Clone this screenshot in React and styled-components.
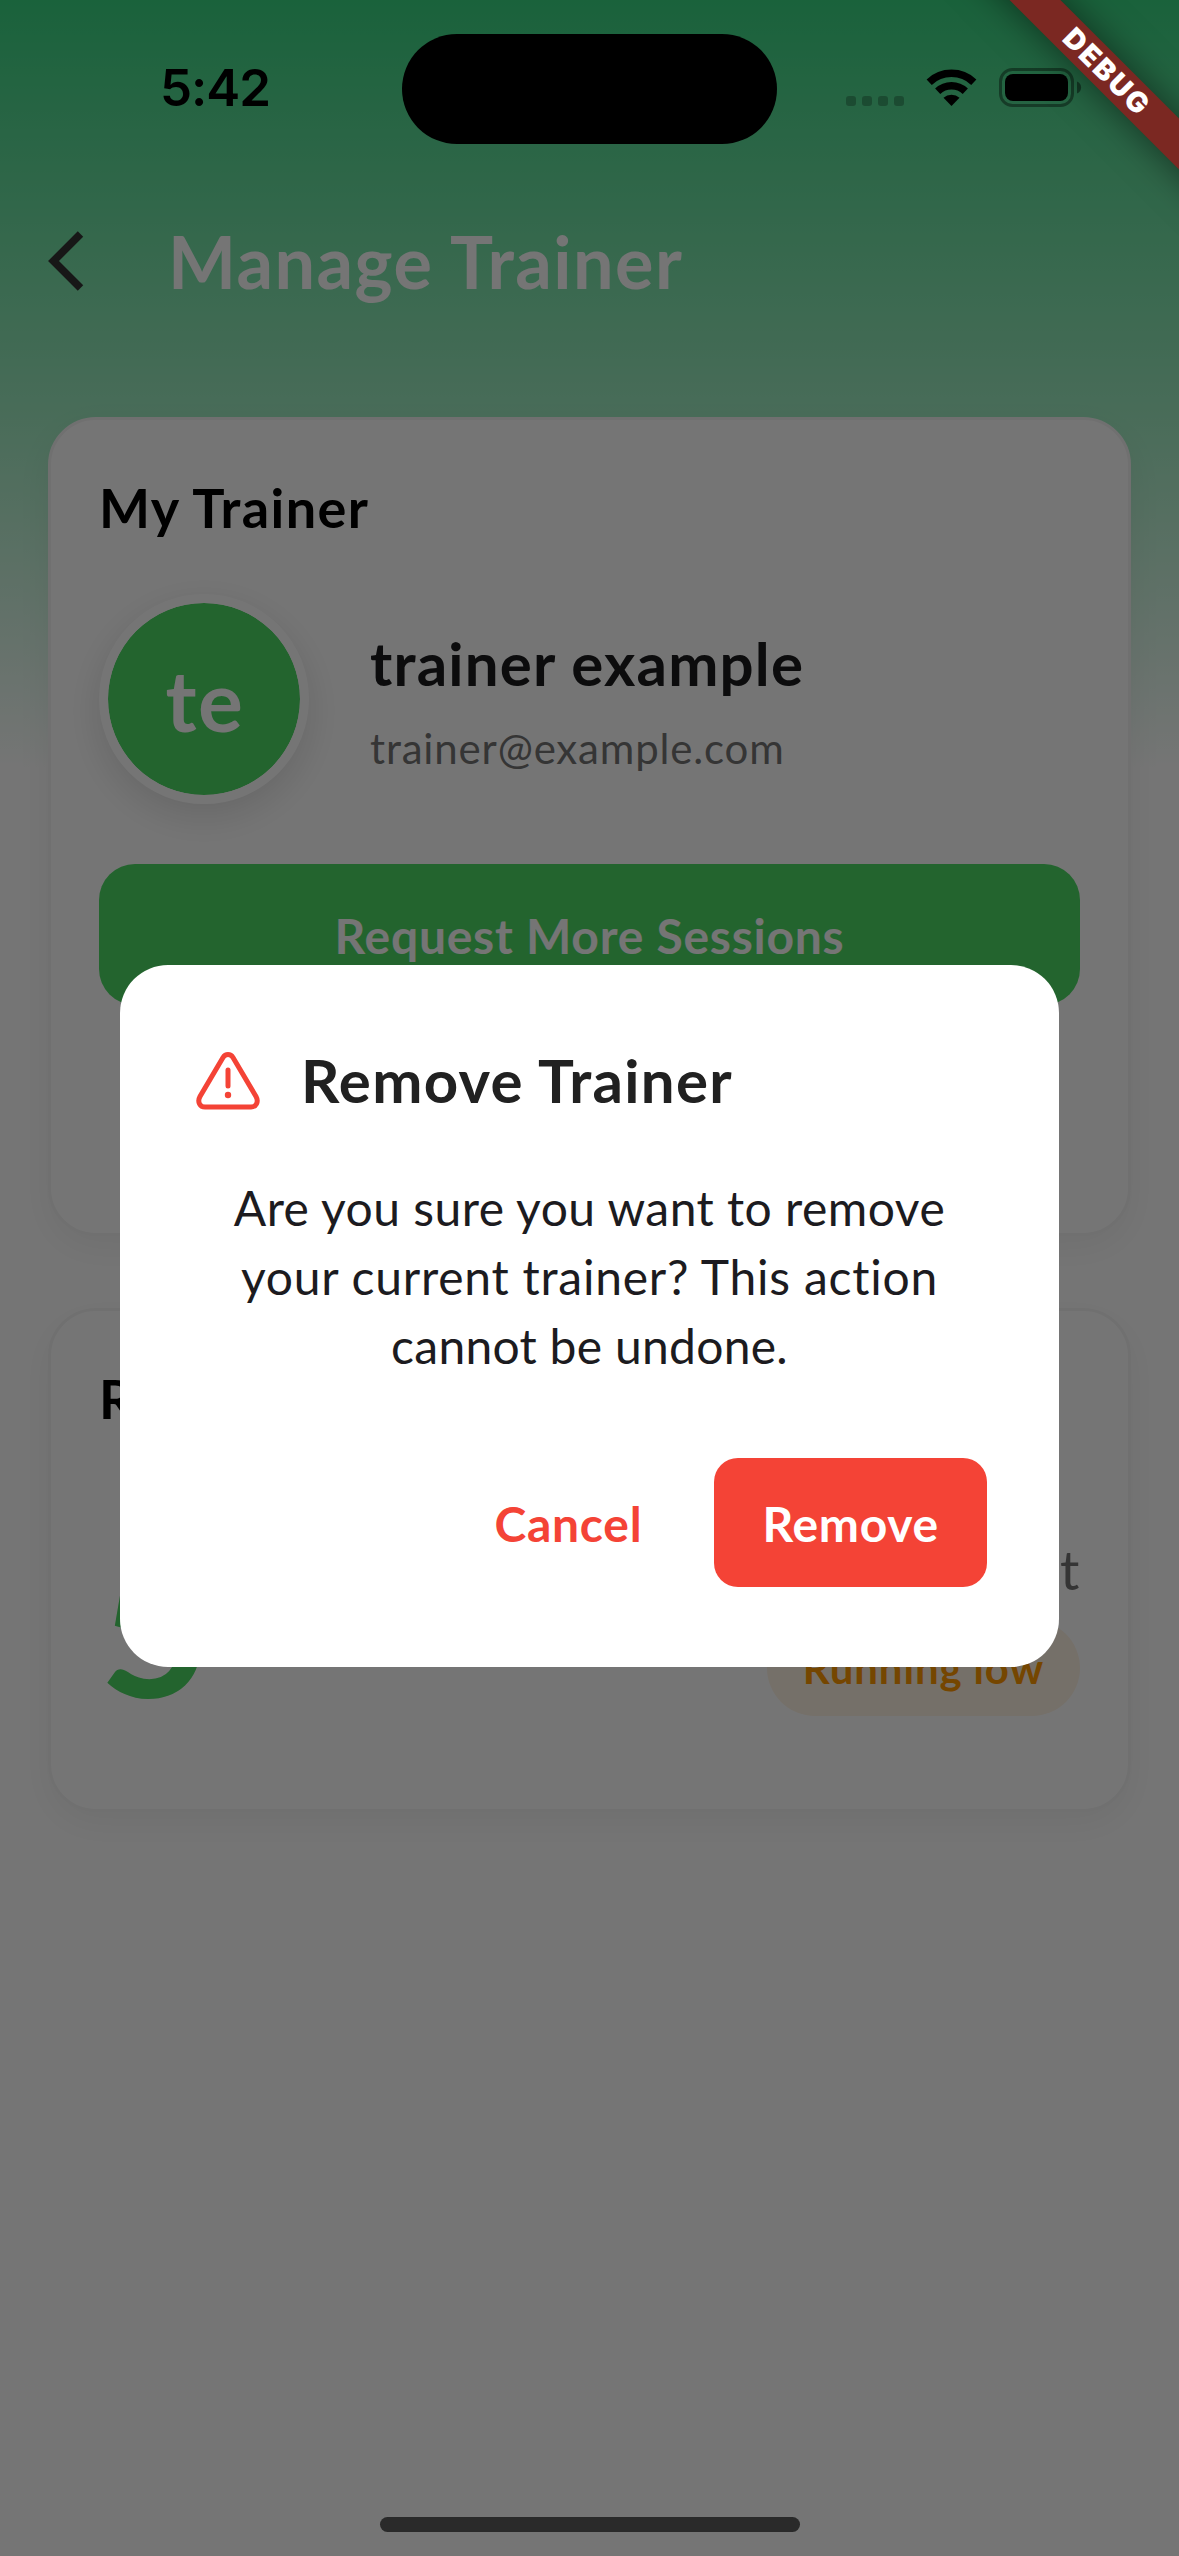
import React from 'react';
import styled, { createGlobalStyle } from 'styled-components';

const Global = createGlobalStyle`
  *{box-sizing:border-box}
  html,body{margin:0;padding:0;background:#757575}
  button{border:0;padding:0;margin:0;font:inherit;background:none}
`;

const Screen = styled.div`
  position: relative;
  width: 1179px;
  height: 2556px;
  overflow: hidden;
  background: #fff;
  font-family: Lato, "Liberation Sans", sans-serif;
`;
const Page = styled.div`
  height: 100%;
  padding-top: 177px;
  background: linear-gradient(180deg, #39d582 0, #a0ecc2 417px, #fff 768px);
`;
const Header = styled.header`
  display: flex;
  align-items: center;
  height: 168px;
  padding-left: 48px;
`;
const Back = styled.svg`
  width: 36px;
  height: 60px;
  margin-right: 84px;
`;
const Title = styled.h1`
  margin: 0;
  padding-bottom: 1px;
  font-size: 72px;
  font-weight: 700;
  line-height: 90px;
  letter-spacing: 1.45px;
  color: #fff;
`;
const Cards = styled.main`
  display: flex;
  flex-direction: column;
  gap: 72px;
  padding: 72px 48px 0;
`;
const Card = styled.section`
  height: ${(p) => p.$height}px;
  padding: 48px;
  border: 3px solid #f5f5f5;
  border-radius: 48px;
  background: #fff;
  box-shadow: 0 12px 36px rgba(0, 0, 0, 0.05);
`;
const CardTitle = styled.h2`
  margin: 0;
  font-size: 54px;
  line-height: 80px;
  font-weight: 700;
  letter-spacing: 1.4px;
  color: #000;
`;
const Profile = styled.div`
  display: flex;
  align-items: center;
  gap: 61px;
  margin-top: 46px;
`;
const Avatar = styled.div`
  display: grid;
  place-items: center;
  width: 210px;
  height: 210px;
  padding-left: 2px;
  border-radius: 50%;
  border: 9px solid #fff;
  background: #4cd964;
  background-clip: padding-box;
  box-shadow: 0 12px 36px rgba(0, 0, 0, 0.12);
  color: #fff;
  font-size: 84px;
  font-weight: 700;
  letter-spacing: 1.5px;
`;
const Person = styled.div`
  display: flex;
  flex-direction: column;
  gap: 16px;
  padding-top: 4px;
`;
const Name = styled.div`
  font-size: 60px;
  line-height: 78px;
  font-weight: 700;
  letter-spacing: 1.2px;
  color: #1c1c1e;
`;
const Email = styled.div`
  font-size: 42px;
  line-height: 60px;
  letter-spacing: 0.83px;
  color: #757575;
`;
const Request = styled.button`
  display: block;
  width: 100%;
  height: 141px;
  margin-top: 60px;
  padding-top: 1px;
  border-radius: 36px;
  background: #4cd964;
  color: #fff;
  font-size: 48px;
  font-weight: 700;
  letter-spacing: 0.75px;
`;
const Balance = styled.div`
  display: flex;
  justify-content: space-between;
  align-items: center;
  margin-top: 69px;
`;
const Count = styled.div`
  font-size: 192px;
  line-height: 230px;
  font-weight: 700;
  color: #4cd964;
`;
const Status = styled.div`
  display: flex;
  flex-direction: column;
  align-items: flex-end;
  gap: 13px;
  padding-top: 2px;
`;
const Left = styled.div`
  font-size: 54px;
  line-height: 75px;
  letter-spacing: 0.75px;
  color: #757575;
`;
const Pill = styled.div`
  padding: 18px 36px;
  border-radius: 48px;
  background: #fff4e5;
  color: #ff9800;
  font-size: 42px;
  line-height: 60px;
  font-weight: 700;
  letter-spacing: 0.85px;
`;
const Scrim = styled.div`
  position: absolute;
  inset: 0;
  display: flex;
  align-items: center;
  justify-content: center;
  padding-top: 75px;
  background: rgba(0, 0, 0, 0.54);
`;
const Dialog = styled.div`
  width: 939px;
  height: 702px;
  padding: 72px;
  border-radius: 48px;
  background: #fff;
`;
const DialogHead = styled.div`
  display: flex;
  align-items: center;
  gap: 37px;
  height: 90px;
`;
const Warning = styled.svg`
  width: 72px;
  height: 72px;
`;
const DialogTitle = styled.h2`
  margin: 0;
  padding-bottom: 4px;
  font-size: 60px;
  line-height: 86px;
  font-weight: 700;
  letter-spacing: 1.3px;
  color: #212121;
`;
const Message = styled.p`
  margin: 46px 0 0;
  text-align: center;
  font-size: 48px;
  line-height: 69px;
  color: #1c1b20;
`;
const Line = styled.span`
  display: block;
  letter-spacing: ${(p) => p.$tracking}px;
`;
const Actions = styled.div`
  display: flex;
  justify-content: flex-end;
  margin-top: 78.5px;
`;
const Action = styled.button`
  height: 129px;
  padding: 1px ${(p) => (p.$solid ? 48 : 72)}px 0;
  border-radius: 24px;
  background: ${(p) => (p.$solid ? '#f44336' : 'transparent')};
  color: ${(p) => (p.$solid ? '#fff' : '#f44336')};
  font-size: 48px;
  font-weight: 700;
  letter-spacing: 0.75px;
`;
const StatusBar = styled.div`
  position: absolute;
  inset: 0 0 auto 0;
  display: grid;
  grid-template-columns: 402px 375px 1fr;
  height: 177px;
  padding-top: 34px;
`;
const Time = styled.div`
  padding-left: 160px;
  font: 600 51px/108px Inter, sans-serif;
  letter-spacing: -1px;
  color: #000;
`;
const Island = styled.div`
  height: 110px;
  border-radius: 55px;
  background: #000;
`;
const Signals = styled.svg`
  width: 402px;
  height: 110px;
`;
const Ribbon = styled.div`
  position: absolute;
  top: 0;
  right: 0;
  width: 300px;
  height: 300px;
  overflow: hidden;
`;
const RibbonBand = styled.div`
  position: absolute;
  left: 28px;
  top: 54px;
  width: 400px;
  height: 36px;
  transform: rotate(45deg);
  background: #7b2822;
  box-shadow: 0 0 36px rgba(0, 0, 0, 0.5);
  color: #fff;
  text-align: center;
  font-family: Inter, Lato, sans-serif;
  font-size: 28.5px;
  line-height: 36px;
  font-weight: 900;
  letter-spacing: 2.2px;
`;
const HomeBar = styled.div`
  position: absolute;
  left: 380px;
  bottom: 24px;
  width: 420px;
  height: 15px;
  border-radius: 8px;
  background: #2a2a2a;
`;

export default function App() {
  return (
    <Screen>
      <Global />
      <Page>
        <Header>
          <Back viewBox="0 0 36 60">
            <path d="M32.500 3 5.500 30l27 27" fill="none" stroke="#333" strokeWidth="7.700" />
          </Back>
          <Title>Manage Trainer</Title>
        </Header>
        <Cards>
          <Card $height={819}>
            <CardTitle>My Trainer</CardTitle>
            <Profile>
              <Avatar>te</Avatar>
              <Person>
                <Name>trainer example</Name>
                <Email>trainer@example.com</Email>
              </Person>
            </Profile>
            <Request>Request More Sessions</Request>
          </Card>
          <Card $height={504}>
            <CardTitle>Remaining Sessions</CardTitle>
            <Balance>
              <Count>5</Count>
              <Status>
                <Left>sessions left</Left>
                <Pill>Running low</Pill>
              </Status>
            </Balance>
          </Card>
        </Cards>
      </Page>
      <Scrim>
        <Dialog>
          <DialogHead>
            <Warning viewBox="0 0 72 72" fill="none" stroke="#f44336" strokeWidth="5" strokeLinecap="round">
              <path d="M31 11.500 8 50.500C5 56 8 61 13 61H59C64 61 67 56 64 50.500L41 11.500C38.500 7.500 33.500 7.500 31 11.500Z" />
              <path d="M36 24v16" />
              <circle cx="36" cy="49" r="3.200" fill="#f44336" stroke="none" />
            </Warning>
            <DialogTitle>Remove Trainer</DialogTitle>
          </DialogHead>
          <Message>
            <Line $tracking={0.48}>Are you sure you want to remove</Line>
            <Line $tracking={0.75}>your current trainer? This action</Line>
            <Line $tracking={0.27}>cannot be undone.</Line>
          </Message>
          <Actions>
            <Action>Cancel</Action>
            <Action $solid>Remove</Action>
          </Actions>
        </Dialog>
      </Scrim>
      <StatusBar>
        <Time>5:42</Time>
        <Island />
        <Signals viewBox="777 34 402 110">
          <g fill="#000" fillOpacity=".25">
            <rect x="846" y="96" width="10" height="10" rx="3" />
            <rect x="862" y="96" width="10" height="10" rx="3" />
            <rect x="878" y="96" width="10" height="10" rx="3" />
            <rect x="894" y="96" width="10" height="10" rx="3" />
          </g>
          <path d="M951.500 106l-8-8.200a12 12 0 0 1 16 0z" />
          <g fill="none" stroke="#000" strokeWidth="7.500">
            <path d="M937.700 91.300a20 20 0 0 1 27.600 0" />
            <path d="M929.200 82.200a32.500 32.500 0 0 1 44.600 0" />
          </g>
          <rect x="1000.500" y="69.500" width="72" height="36" rx="12" fill="none" stroke="#000" strokeOpacity=".4" strokeWidth="3" />
          <rect x="1005" y="74" width="63" height="27" rx="8" />
          <path d="M1077 81.500c5.500 2 5.500 10 0 12z" fillOpacity=".45" />
        </Signals>
      </StatusBar>
      <Ribbon>
        <RibbonBand>DEBUG</RibbonBand>
      </Ribbon>
      <HomeBar />
    </Screen>
  );
}
